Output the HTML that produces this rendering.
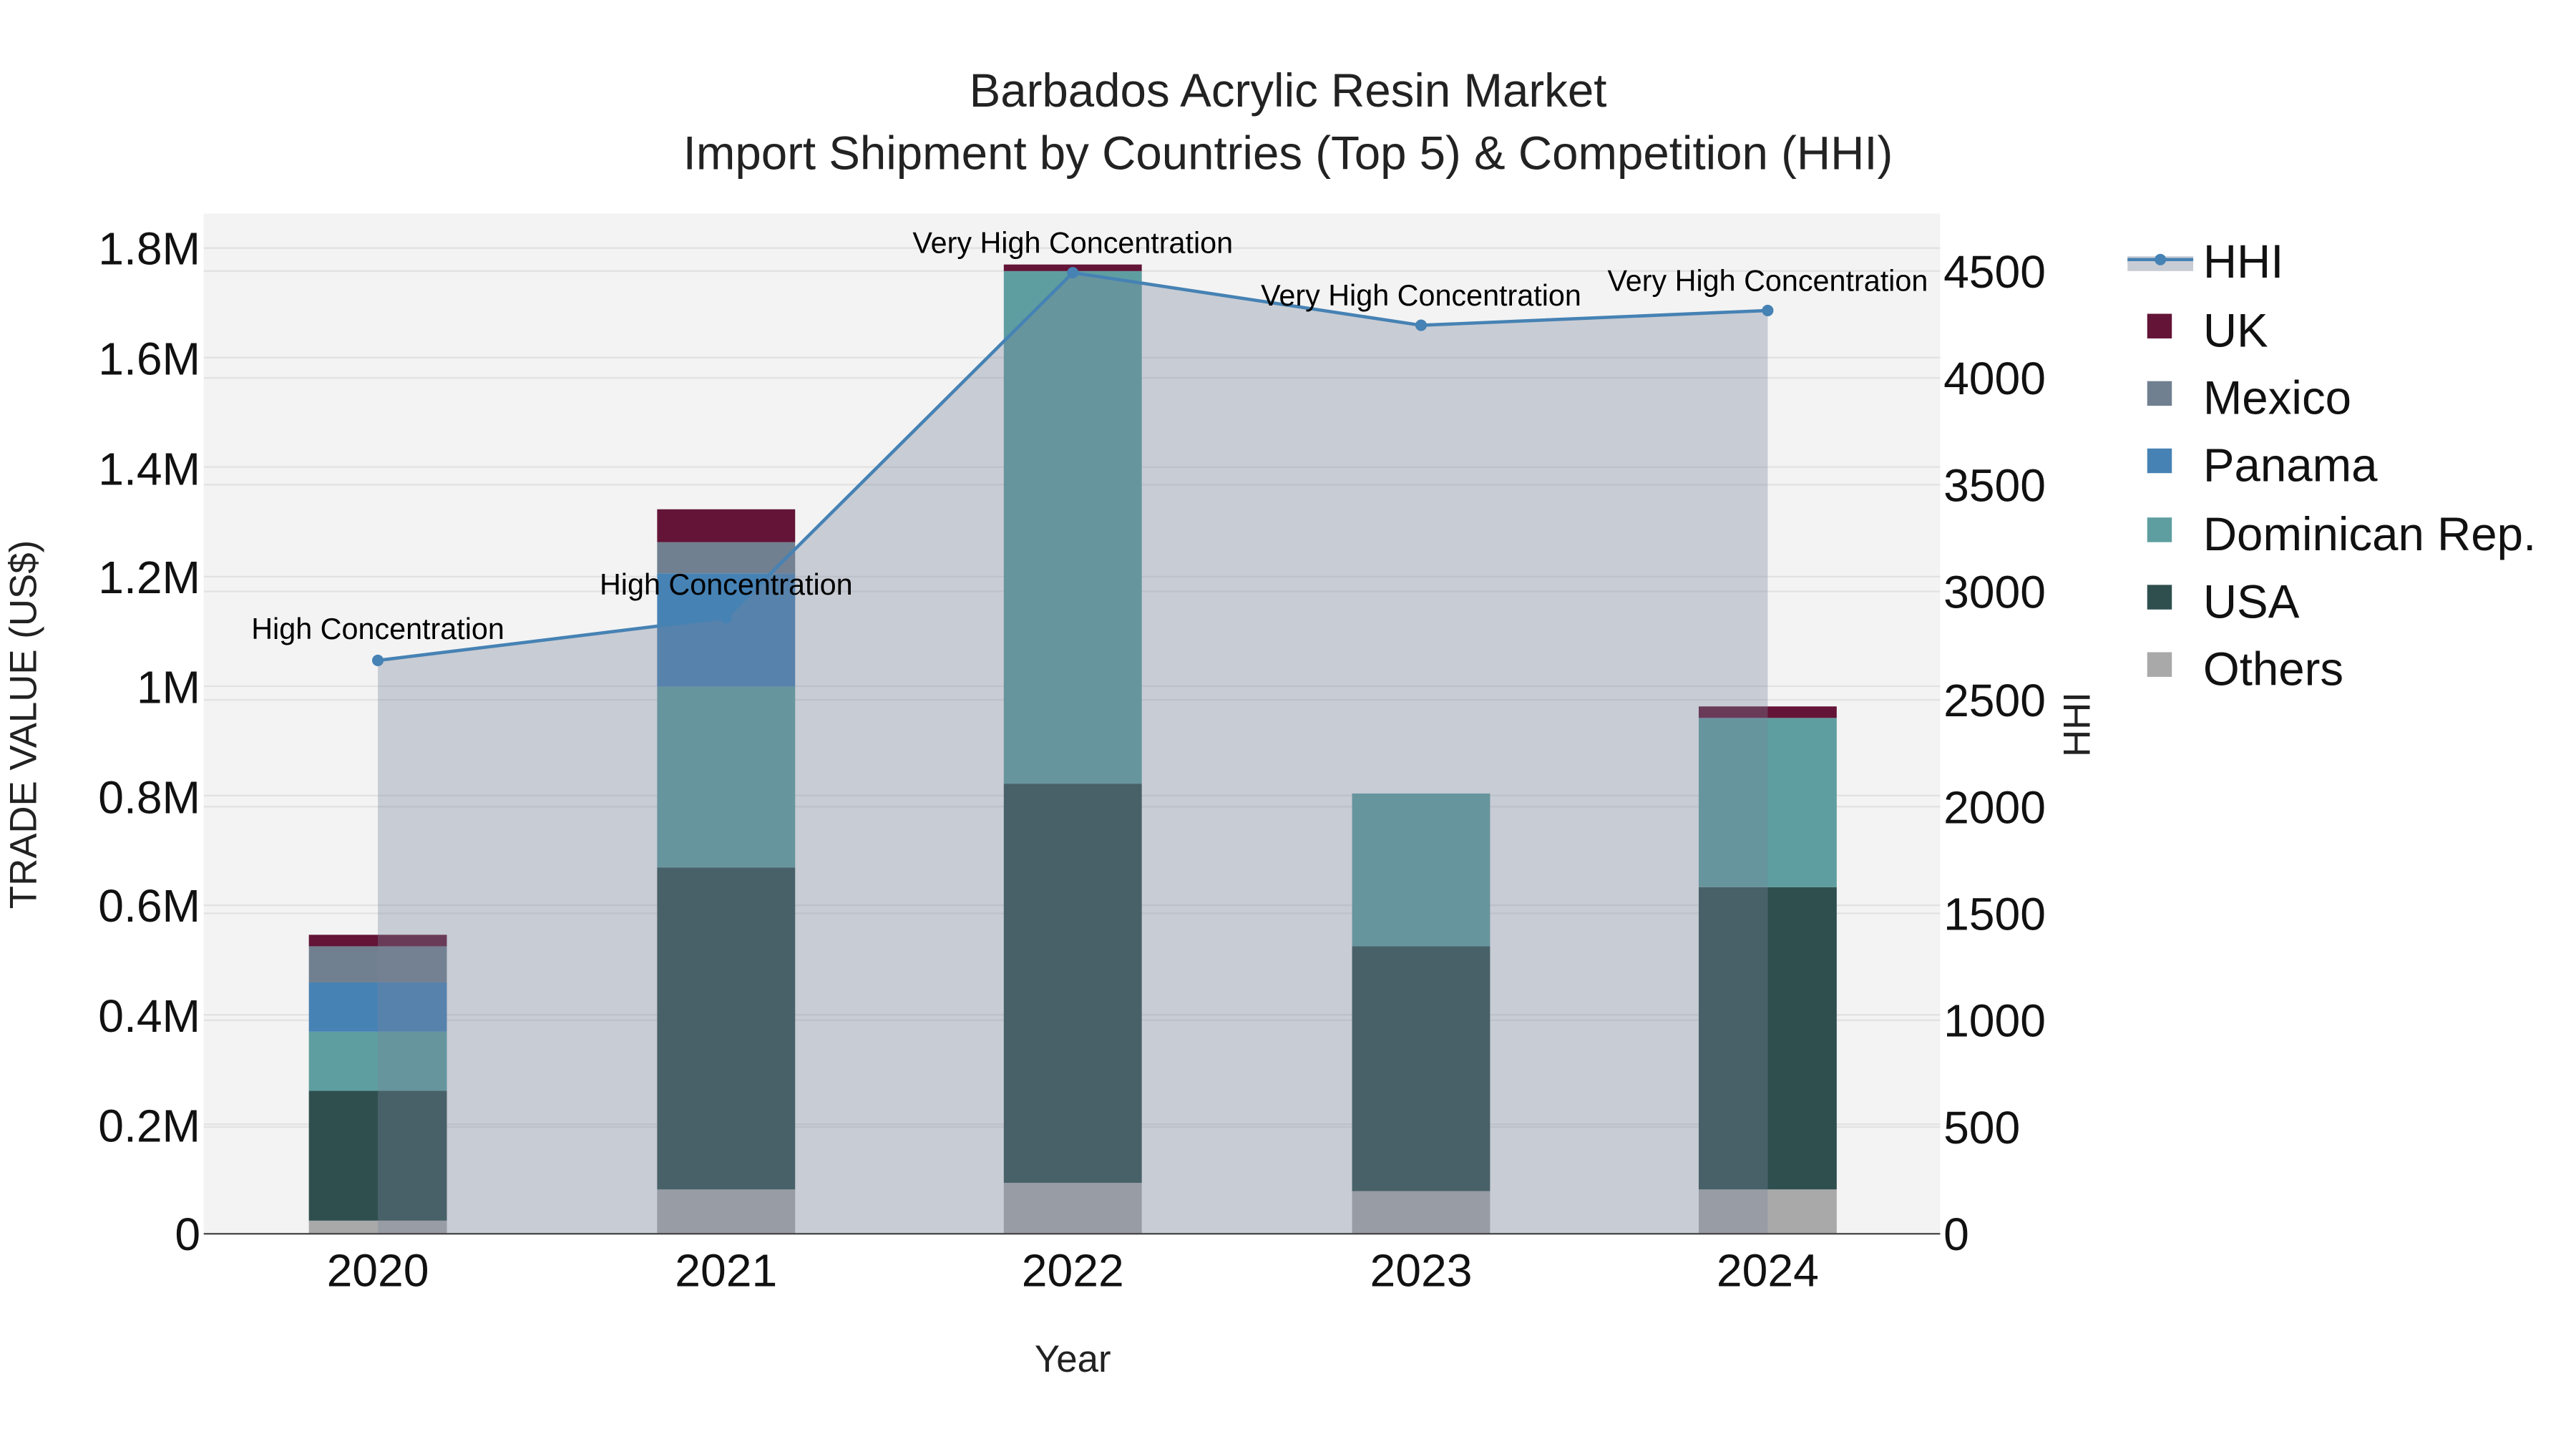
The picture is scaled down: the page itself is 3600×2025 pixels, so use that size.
<!DOCTYPE html>
<html><head><meta charset="utf-8"><style>html,body{margin:0;padding:0;background:#fff}svg{display:block}</style></head>
<body>
<svg width="3600" height="2025" viewBox="0 0 1568 882" xmlns="http://www.w3.org/2000/svg" font-family="Liberation Sans, Arial, sans-serif">
<rect width="1568" height="882" fill="#fff"/>
<rect x="124" y="130" width="1057" height="621" fill="#f3f3f3"/>
<g stroke="#e2e2e2" stroke-width="1">
<line x1="124" x2="1181" y1="684.3" y2="684.3"/><line x1="124" x2="1181" y1="617.7" y2="617.7"/><line x1="124" x2="1181" y1="551" y2="551"/><line x1="124" x2="1181" y1="484.3" y2="484.3"/><line x1="124" x2="1181" y1="417.7" y2="417.7"/><line x1="124" x2="1181" y1="351" y2="351"/><line x1="124" x2="1181" y1="284.3" y2="284.3"/><line x1="124" x2="1181" y1="217.7" y2="217.7"/><line x1="124" x2="1181" y1="151" y2="151"/>
<line x1="124" x2="1181" y1="686" y2="686"/><line x1="124" x2="1181" y1="621" y2="621"/><line x1="124" x2="1181" y1="556" y2="556"/><line x1="124" x2="1181" y1="491" y2="491"/><line x1="124" x2="1181" y1="426" y2="426"/><line x1="124" x2="1181" y1="360" y2="360"/><line x1="124" x2="1181" y1="295" y2="295"/><line x1="124" x2="1181" y1="230" y2="230"/><line x1="124" x2="1181" y1="165" y2="165"/>
</g>
<g>
<rect x="188" y="743" width="84" height="8" fill="#a9a9a9"/><rect x="188" y="664" width="84" height="79" fill="#2f4f4f"/><rect x="188" y="628" width="84" height="36" fill="#5f9ea0"/><rect x="188" y="598" width="84" height="30" fill="#4682b4"/><rect x="188" y="576" width="84" height="22" fill="#708090"/><rect x="188" y="569" width="84" height="7" fill="#631437"/>
<rect x="400" y="724" width="84" height="27" fill="#a9a9a9"/><rect x="400" y="528" width="84" height="196" fill="#2f4f4f"/><rect x="400" y="418" width="84" height="110" fill="#5f9ea0"/><rect x="400" y="349" width="84" height="69" fill="#4682b4"/><rect x="400" y="330" width="84" height="19" fill="#708090"/><rect x="400" y="310" width="84" height="20" fill="#631437"/>
<rect x="611" y="720" width="84" height="31" fill="#a9a9a9"/><rect x="611" y="477" width="84" height="243" fill="#2f4f4f"/><rect x="611" y="165" width="84" height="312" fill="#5f9ea0"/><rect x="611" y="161" width="84" height="4" fill="#631437"/>
<rect x="823" y="725" width="84" height="26" fill="#a9a9a9"/><rect x="823" y="576" width="84" height="149" fill="#2f4f4f"/><rect x="823" y="483" width="84" height="93" fill="#5f9ea0"/>
<rect x="1034" y="724" width="84" height="27" fill="#a9a9a9"/><rect x="1034" y="540" width="84" height="184" fill="#2f4f4f"/><rect x="1034" y="437" width="84" height="103" fill="#5f9ea0"/><rect x="1034" y="430" width="84" height="7" fill="#631437"/>
</g>
<polygon points="230,751 230,402 442,376 653,166 865,198 1076,189 1076,751" fill="rgb(119,131,154)" fill-opacity="0.35"/>
<polyline points="230,402 442,376 653,166 865,198 1076,189" fill="none" stroke="#4682b4" stroke-width="2"/>
<g fill="#4682b4"><circle cx="230" cy="402" r="3.5"/><circle cx="442" cy="376" r="3.5"/><circle cx="653" cy="166" r="3.5"/><circle cx="865" cy="198" r="3.5"/><circle cx="1076" cy="189" r="3.5"/></g>
<line x1="124" x2="1181" y1="751" y2="751" stroke="#444" stroke-width="1"/>
<g font-size="18" text-anchor="middle" fill="#000">
<text x="230" y="389">High Concentration</text><text x="442" y="362">High Concentration</text><text x="653" y="154">Very High Concentration</text><text x="865" y="186">Very High Concentration</text><text x="1076" y="177">Very High Concentration</text>
</g>
<g font-size="28" text-anchor="end" fill="#111">
<text x="122" y="761">0</text><text x="122" y="695">0.2M</text><text x="122" y="628">0.4M</text><text x="122" y="561">0.6M</text><text x="122" y="495">0.8M</text><text x="122" y="428">1M</text><text x="122" y="361">1.2M</text><text x="122" y="295">1.4M</text><text x="122" y="228">1.6M</text><text x="122" y="161">1.8M</text>
</g>
<g font-size="28" text-anchor="start" fill="#111">
<text x="1183" y="761">0</text><text x="1183" y="696">500</text><text x="1183" y="631">1000</text><text x="1183" y="566">1500</text><text x="1183" y="501">2000</text><text x="1183" y="436">2500</text><text x="1183" y="370">3000</text><text x="1183" y="305">3500</text><text x="1183" y="240">4000</text><text x="1183" y="175">4500</text>
</g>
<g font-size="28" text-anchor="middle" fill="#111">
<text x="230" y="783">2020</text><text x="442" y="783">2021</text><text x="653" y="783">2022</text><text x="865" y="783">2023</text><text x="1076" y="783">2024</text>
</g>
<text x="653" y="835" font-size="23" text-anchor="middle" fill="#222">Year</text>
<text transform="translate(22,441) rotate(-90)" font-size="23" text-anchor="middle" fill="#222">TRADE VALUE (US$)</text>
<text transform="translate(1272,441) rotate(-90)" font-size="23" text-anchor="middle" fill="#222">HHI</text>
<text x="784" y="65" font-size="28.5" text-anchor="middle" fill="#222">Barbados Acrylic Resin Market</text>
<text x="784" y="103" font-size="28.5" text-anchor="middle" fill="#222">Import Shipment by Countries (Top 5) &amp; Competition (HHI)</text>
<rect x="1295" y="156" width="40" height="9" fill="#c8ccd4"/>
<line x1="1295" x2="1335" y1="158" y2="158" stroke="#4682b4" stroke-width="2"/><circle cx="1315" cy="158" r="3.5" fill="#4682b4"/>
<rect x="1307" y="191" width="15" height="15" fill="#631437"/>
<rect x="1307" y="232" width="15" height="15" fill="#708090"/>
<rect x="1307" y="273" width="15" height="15" fill="#4682b4"/>
<rect x="1307" y="315" width="15" height="15" fill="#5f9ea0"/>
<rect x="1307" y="356" width="15" height="15" fill="#2f4f4f"/>
<rect x="1307" y="397" width="15" height="15" fill="#a9a9a9"/>
<g font-size="28.5" fill="#111">
<text x="1341" y="169">HHI</text><text x="1341" y="211">UK</text><text x="1341" y="252">Mexico</text><text x="1341" y="293">Panama</text><text x="1341" y="335">Dominican Rep.</text><text x="1341" y="376">USA</text><text x="1341" y="417">Others</text>
</g>
</svg>
</body></html>
